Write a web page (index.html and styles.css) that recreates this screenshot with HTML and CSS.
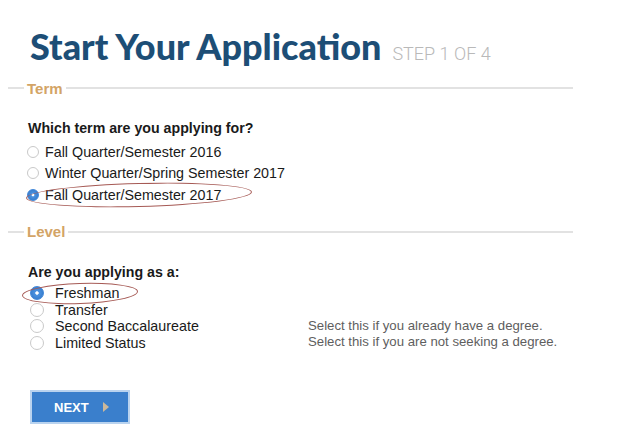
FILE: index.html
```html
<!doctype html>
<html>
    <head>
        <meta charset="UTF-8">
        <title>Start Your Application</title>
        <link rel="stylesheet" href="styles.css">
    </head>
    <body>
        <main class="app">
            <header class="app-head">
                <h1>Start Your Application</h1>
                <span class="step">STEP 1 OF 4</span>
            </header>

            <section class="group">
                <div class="legend"><span>Term</span></div>
                <p class="question">Which term are you applying for?</p>
                <ul class="options term-options">
                    <li><span class="radio"></span>Fall Quarter/Semester 2016</li>
                    <li><span class="radio"></span>Winter Quarter/Spring Semester 2017</li>
                    <li class="picked"><span class="radio checked"></span>Fall Quarter/Semester 2017<span class="mark mark-term"></span></li>
                </ul>
            </section>

            <section class="group group-level">
                <div class="legend"><span>Level</span></div>
                <p class="question">Are you applying as a:</p>
                <div class="level-grid">
                    <ul class="options level-options">
                        <li class="picked"><span class="radio checked"></span>Freshman<span class="mark mark-level"></span></li>
                        <li><span class="radio"></span>Transfer</li>
                        <li><span class="radio"></span>Second Baccalaureate</li>
                        <li><span class="radio"></span>Limited Status</li>
                    </ul>
                    <ul class="hints">
                        <li>Select this if you already have a degree.</li>
                        <li>Select this if you are not seeking a degree.</li>
                    </ul>
                </div>
            </section>

            <button class="next" type="button">NEXT <span class="arrow"></span></button>
        </main>
    </body>
</html>
```

FILE: styles.css
```css
:root {
    --title: #1d4e76;
    --legend: #d3a466;
    --rule: #e2e2e2;
    --ink: #1a1a1a;
    --blue: #3a7fcc;
    --mark: #a65a55;
}

html, body {
    margin: 0;
    background-color: #fff;
}

* {
    font-family: "Liberation Sans", Arial, sans-serif;
    color: var(--ink);
}

.app {
    width: 565px;
    margin-left: 8px;
    padding-top: 24px;
}

.app-head {
    display: flex;
    align-items: baseline;
    gap: 11px;
    padding-left: 22px;
}

h1 {
    margin: 0;
    font-family: Lato, sans-serif;
    font-weight: 900;
    font-size: 36px;
    line-height: 44px;
    color: var(--title);
}

.step {
    font-family: Roboto, sans-serif;
    font-weight: 300;
    font-size: 18px;
    color: #b9b9b9;
}

.group {
    margin-top: 10px;
}

.group-level {
    margin-top: 16px;
}

.legend {
    display: flex;
    align-items: center;
    gap: 3px;
    height: 20px;
}

.legend::before,
.legend::after {
    content: "";
    border-top: 2px solid var(--rule);
}

.legend::before {
    width: 16px;
}

.legend::after {
    flex: 1;
}

.legend span {
    font-weight: bold;
    font-size: 15px;
    color: var(--legend);
}

.question {
    margin: 20px 0 3px 20px;
    font-weight: bold;
    font-size: 14.2px;
    line-height: 20px;
}

.options, .hints {
    list-style: none;
    margin: 0;
    padding: 0;
}

.options li {
    position: relative;
    display: flex;
    align-items: center;
    font-size: 14.3px;
}

.term-options {
    padding-left: 19px;
}

.term-options li {
    height: 21.5px;
}

.term-options .radio {
    width: 12px;
    height: 12px;
    margin-right: 6px;
}

.radio {
    display: inline-block;
    box-sizing: border-box;
    border-radius: 50%;
    border: 1px solid #c9c9c9;
    background: #fff;
    position: relative;
}

.radio.checked {
    border-color: #3f86d8;
    background: radial-gradient(circle, #fff 0 16%, #4b92e0 24%, #2f73c4 100%);
}

.mark {
    position: absolute;
    border: 1.5px solid var(--mark);
    border-radius: 50%;
}

.mark-term {
    left: -1px;
    top: -1px;
    width: 224px;
    height: 22px;
    transform: rotate(-1.5deg);
}

.mark-level {
    left: -8px;
    top: -2px;
    width: 114px;
    height: 19px;
    transform: rotate(-2deg);
}

.level-grid {
    display: flex;
    padding-left: 22px;
}

.level-options {
    width: 278px;
}

.level-options li {
    height: 16.7px;
}

.level-options .radio {
    width: 14px;
    height: 14px;
    margin-right: 11px;
}

.hints {
    padding-top: 33px;
}

.hints li {
    font-size: 13.2px;
    line-height: 16.7px;
    color: #5e5e5e;
}

.next {
    display: flex;
    align-items: center;
    gap: 14px;
    margin: 39px 0 0 22px;
    width: 100px;
    height: 34px;
    padding: 0 0 0 22px;
    border: 2px solid #b9d3ef;
    background: var(--blue);
    color: #fff;
    font-weight: bold;
    font-size: 13px;
    cursor: pointer;
}

.arrow {
    width: 0;
    height: 0;
    border-top: 5px solid transparent;
    border-bottom: 5px solid transparent;
    border-left: 6px solid #cbb89a;
}
```
